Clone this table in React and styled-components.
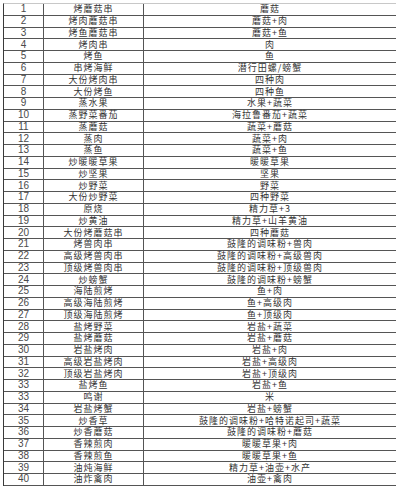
import styled, { createGlobalStyle } from "styled-components";

const GlobalStyle = createGlobalStyle`
  html, body { margin: 0; padding: 0; background: #fff; }
  body { font-family: "Noto Sans CJK SC", "Noto Sans", sans-serif; }
`;

const rows = [
  ["1", "烤蘑菇串", "蘑菇"],
  ["2", "烤肉蘑菇串", "蘑菇+肉"],
  ["3", "烤鱼蘑菇串", "蘑菇+鱼"],
  ["4", "烤肉串", "肉"],
  ["5", "烤鱼", "鱼"],
  ["6", "串烤海鲜", "潜行田螺/螃蟹"],
  ["7", "大份烤肉串", "四种肉"],
  ["8", "大份烤鱼", "四种鱼"],
  ["9", "蒸水果", "水果+蔬菜"],
  ["10", "蒸野菜番茄", "海拉鲁番茄+蔬菜"],
  ["11", "蒸蘑菇", "蔬菜+蘑菇"],
  ["12", "蒸肉", "蔬菜+肉"],
  ["13", "蒸鱼", "蔬菜+鱼"],
  ["14", "炒暖暖草果", "暖暖草果"],
  ["15", "炒坚果", "坚果"],
  ["16", "炒野菜", "野菜"],
  ["17", "大份炒野菜", "四种野菜"],
  ["18", "原烧", "精力草+3"],
  ["19", "炒黄油", "精力草+山羊黄油"],
  ["20", "大份烤蘑菇串", "四种蘑菇"],
  ["21", "烤兽肉串", "鼓隆的调味粉+兽肉"],
  ["22", "高级烤兽肉串", "鼓隆的调味粉+高级兽肉"],
  ["23", "顶级烤兽肉串", "鼓隆的调味粉+顶级兽肉"],
  ["24", "炒螃蟹", "鼓隆的调味粉+螃蟹"],
  ["25", "海陆煎烤", "鱼+肉"],
  ["26", "高级海陆煎烤", "鱼+高级肉"],
  ["27", "顶级海陆煎烤", "鱼+顶级肉"],
  ["28", "盐烤野菜", "岩盐+蔬菜"],
  ["29", "盐烤蘑菇", "岩盐+蘑菇"],
  ["30", "岩盐烤肉", "岩盐+肉"],
  ["31", "高级岩盐烤肉", "岩盐+高级肉"],
  ["32", "顶级岩盐烤肉", "岩盐+顶级肉"],
  ["33", "盐烤鱼", "岩盐+鱼"],
  ["33", "鸣谢", "米"],
  ["34", "岩盐烤蟹", "岩盐+螃蟹"],
  ["35", "炒香草", "鼓隆的调味粉+哈特诺起司+蔬菜"],
  ["36", "炒香蘑菇", "鼓隆的调味粉+蘑菇"],
  ["37", "香辣煎肉", "暖暖草果+肉"],
  ["38", "香辣煎鱼", "暖暖草果+鱼"],
  ["39", "油炖海鲜", "精力草+油壶+水产"],
  ["40", "油炸禽肉", "油壶+禽肉"],
];

const Page = styled.div`
  padding: 3px 4px 0 3px;
`;

const Sheet = styled.div`
  display: grid;
  grid-template-columns: 40px 100px 1fr;
  grid-auto-rows: 11.76px;
  border-top: 1px solid #c8c8c8;
  border-left: 1px solid #3a3a3a;
`;

const Row = styled.div`
  display: contents;
`;

const Cell = styled.div`
  display: flex;
  align-items: center;
  justify-content: center;
  white-space: nowrap;
  font-size: ${(p) => (p.$num ? "10px" : "9px")};
  letter-spacing: ${(p) => (p.$num ? "0" : "1px")};
  line-height: 10px;
  color: ${(p) => (p.$num ? "#4a4a4a" : "#333")};
  border-bottom: 1px solid #555;
  border-right: ${(p) => (p.$last ? "none" : "1px solid #555")};
  font-family: ${(p) =>
    p.$num ? '"Liberation Sans", Arial, sans-serif' : '"Noto Sans CJK SC", sans-serif'};
`;

export default function App() {
  return (
    <>
      <GlobalStyle />
      <Page>
        <Sheet>
          {rows.map(([n, name, recipe], i) => (
            <Row key={i}>
              <Cell $num>{n}</Cell>
              <Cell>{name}</Cell>
              <Cell $last>{recipe}</Cell>
            </Row>
          ))}
        </Sheet>
      </Page>
    </>
  );
}
